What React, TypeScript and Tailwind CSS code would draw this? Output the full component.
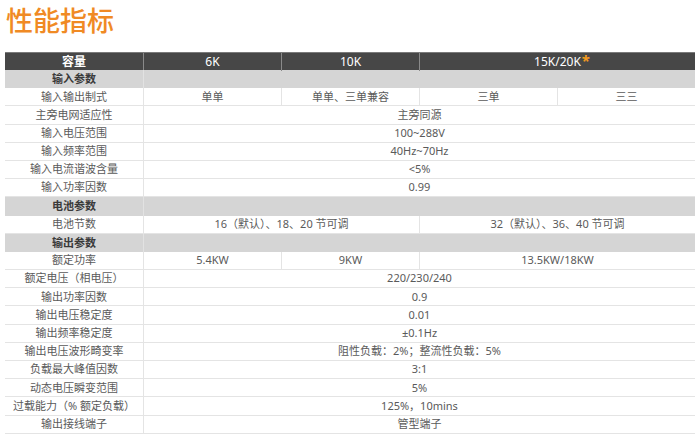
import React from "react";

type Cell = { text: React.ReactNode; span?: number };

const font = { fontFamily: '"Noto Sans", "Noto Sans CJK SC", sans-serif' };

function DataRow({ label, cells }: { label: string; cells: Cell[] }) {
  return (
    <div className="grid grid-cols-5 h-[18.2px] border-b border-[#e4e4e4] bg-white text-[11px] text-[#5a5a5a]">
      <div className="flex items-center justify-center whitespace-nowrap">{label}</div>
      {cells.map((c, i) => (
        <div
          key={i}
          className={`flex items-center justify-center whitespace-nowrap border-l border-[#e4e4e4] ${
            c.span === 4 ? "col-span-4" : c.span === 2 ? "col-span-2" : ""
          }`}
        >
          {c.text}
        </div>
      ))}
    </div>
  );
}

function SectionRow({ label }: { label: string }) {
  return (
    <div className="grid grid-cols-5 h-[18.2px] bg-[#d5d5d5] text-[11px] font-bold text-[#3a3a3a]">
      <div className="flex items-center justify-center">{label}</div>
      <div className="col-span-4 border-l border-[#e2e2e2]" />
    </div>
  );
}

export default function App() {
  return (
    <div className="w-[700px] h-[435px] bg-white overflow-hidden" style={font}>
      <div className="h-[52px] pl-[6px] pt-[3px] text-[27px] leading-[36px] text-[#f08a24] font-medium">
        性能指标
      </div>
      <div className="mx-[5px]">
        <div className="grid grid-cols-5 h-[18px] bg-[#474747] border-t border-[#7a7a7a] text-[12px] text-white">
          <div className="flex items-center justify-center font-bold">容量</div>
          <div className="flex items-center justify-center border-l border-[#8a8a8a]">6K</div>
          <div className="flex items-center justify-center border-l border-[#8a8a8a]">10K</div>
          <div className="col-span-2 flex items-center justify-center border-l border-[#8a8a8a]">
            <span className="relative">
              15K/20K
              <span className="absolute -right-[9px] top-[0px] text-[15px] font-bold leading-none text-[#f39a1e]">*</span>
            </span>
          </div>
        </div>
        <SectionRow label="输入参数" />
        <DataRow
          label="输入输出制式"
          cells={[{ text: "单单" }, { text: "单单、三单兼容" }, { text: "三单" }, { text: "三三" }]}
        />
        <DataRow label="主旁电网适应性" cells={[{ text: "主旁同源", span: 4 }]} />
        <DataRow label="输入电压范围" cells={[{ text: "100~288V", span: 4 }]} />
        <DataRow label="输入频率范围" cells={[{ text: "40Hz~70Hz", span: 4 }]} />
        <DataRow label="输入电流谐波含量" cells={[{ text: "<5%", span: 4 }]} />
        <DataRow label="输入功率因数" cells={[{ text: "0.99", span: 4 }]} />
        <SectionRow label="电池参数" />
        <DataRow
          label="电池节数"
          cells={[
            { text: "16（默认）、18、20 节可调", span: 2 },
            { text: "32（默认）、36、40 节可调", span: 2 },
          ]}
        />
        <SectionRow label="输出参数" />
        <DataRow
          label="额定功率"
          cells={[{ text: "5.4KW" }, { text: "9KW" }, { text: "13.5KW/18KW", span: 2 }]}
        />
        <DataRow label="额定电压（相电压）" cells={[{ text: "220/230/240", span: 4 }]} />
        <DataRow label="输出功率因数" cells={[{ text: "0.9", span: 4 }]} />
        <DataRow label="输出电压稳定度" cells={[{ text: "0.01", span: 4 }]} />
        <DataRow label="输出频率稳定度" cells={[{ text: "±0.1Hz", span: 4 }]} />
        <DataRow label="输出电压波形畸变率" cells={[{ text: "阻性负载：2%；整流性负载：5%", span: 4 }]} />
        <DataRow label="负载最大峰值因数" cells={[{ text: "3:1", span: 4 }]} />
        <DataRow label="动态电压瞬变范围" cells={[{ text: "5%", span: 4 }]} />
        <DataRow label="过载能力（% 额定负载）" cells={[{ text: "125%，10mins", span: 4 }]} />
        <DataRow label="输出接线端子" cells={[{ text: "管型端子", span: 4 }]} />
      </div>
    </div>
  );
}
